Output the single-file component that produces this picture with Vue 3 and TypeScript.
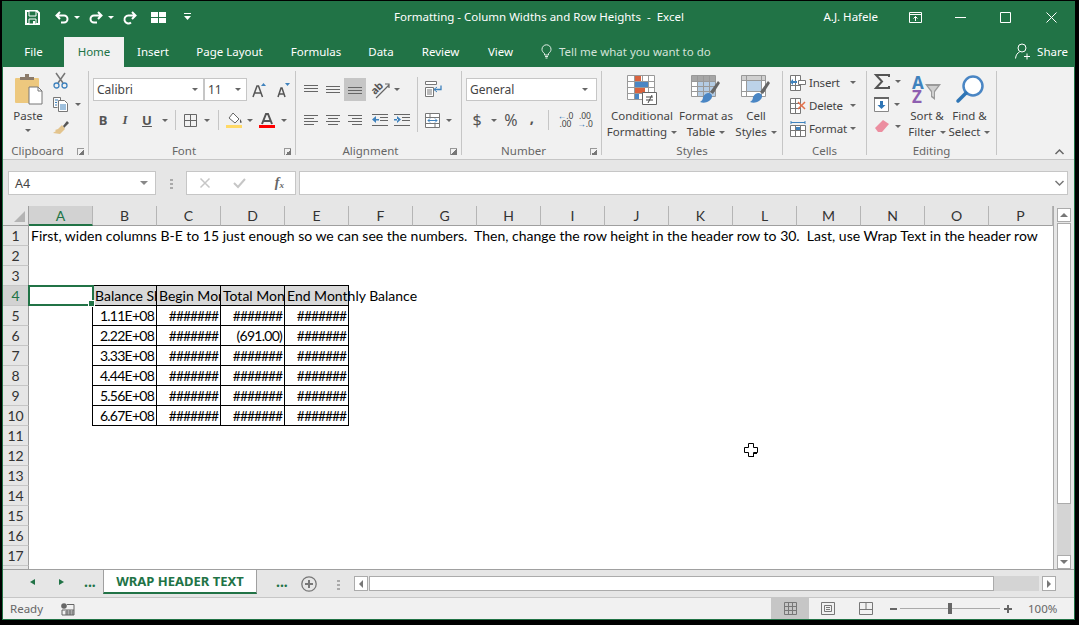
<script setup lang="ts">
import { computed } from 'vue'

interface SheetCell {
  key: string
  text: string
  classes: Record<string, boolean>
}

const columns = 'ABCDEFGHIJKLMNOP'.split('')
const tabs = ['File', 'Home', 'Insert', 'Page Layout', 'Formulas', 'Data', 'Review', 'View']
const docTitle = 'Formatting - Column Widths and Row Heights  -  Excel'

const values: Record<string, string> = {
  A1: 'First, widen columns B-E to 15 just enough so we can see the numbers.  Then, change the row height in the header row to 30.  Last, use Wrap Text in the header row',
  B4: 'Balance Sheet',
  C4: 'Begin Monthly',
  D4: 'Total Monthly',
  E4: 'End Monthly Balance',
  B5: '1.11E+08',
  B6: '2.22E+08',
  B7: '3.33E+08',
  B8: '4.44E+08',
  B9: '5.56E+08',
  B10: '6.67E+08',
  D6: '(691.00)'
}

const hashes = '#######'

const rows = computed(() => {
  const list: { num: number; cells: SheetCell[] }[] = []
  for (let r = 1; r <= 18; r++) {
    const cells = columns.map((col) => {
      const inTable = r >= 4 && r <= 10 && 'BCDE'.includes(col)
      let text = values[col + r] || ''
      if (inTable && r > 4 && !text) text = hashes
      return {
        key: col + r,
        text,
        classes: {
          boxed: inTable,
          head: inTable && r === 4,
          num: inTable && r > 4,
          hash: text === hashes,
          above: r === 3 && 'BCDE'.includes(col),
          before: col === 'A' && r >= 4 && r <= 10,
          spill: col + r === 'A1' || col + r === 'E4'
        }
      }
    })
    list.push({ num: r, cells })
  }
  return list
})
</script>

<template>
  <div class="window">
    <div class="titlebar">
      <svg class="qa-save" width="15" height="15" viewBox="0 0 15 15"><path d="M1 1h11l2 2v11H1z" fill="none" stroke="#fff" stroke-width="2" /><path d="M4 1h7v5H4zM4 9h7v5H4z" fill="#217346" stroke="#fff" /><rect x="8" y="11" width="2" height="3" fill="#fff" /></svg>
      <svg class="qa-undo" width="14" height="13" viewBox="0 0 14 13"><path d="M5 1 1.5 4.5 5 8M2 4.5h7a3.5 3.5 0 0 1 0 7H6" fill="none" stroke="#fff" stroke-width="2" /></svg>
      <i class="qa-caret caret white"></i>
      <svg class="qa-redo" width="14" height="13" viewBox="0 0 14 13"><path d="M9 1l3.500 3.500L9 8M12 4.500H5a3.500 3.500 0 0 0 0 7h3" fill="none" stroke="#fff" stroke-width="2" /></svg>
      <i class="qa-caret caret white"></i>
      <svg class="qa-redo" width="14" height="13" viewBox="0 0 14 13"><path d="M9 1l3.500 3.500L9 8M12 4.500H6a4 4 0 1 0 2 7" fill="none" stroke="#fff" stroke-width="2" /></svg>
      <svg class="qa-grid" width="15" height="11" viewBox="0 0 15 11"><path d="M0 0h7v5H0zM8 0h7v5H8zM0 6h7v5H0zM8 6h7v5H8z" fill="#fff" /></svg>
      <svg class="qa-more" width="7" height="8" viewBox="0 0 7 8"><path d="M0 0h7v1H0zM0 3h7L3.500 7z" fill="#fff" /></svg>
      <span class="doc-title">{{ docTitle }}</span>
      <span class="user">A.J. Hafele</span>
      <span class="win-btn first">
        <svg width="13" height="11" viewBox="0 0 13 11"><path d="M.5.500h12v10H.500zM0 2.500h13M6.500 9V4.500M4.500 6.500l2-2 2 2" fill="none" stroke="#fff" /></svg>
      </span>
      <span class="win-btn"><svg width="11" height="11" viewBox="0 0 11 11"><path d="M0 5.500h11" stroke="#fff" /></svg></span>
      <span class="win-btn"><svg width="11" height="11" viewBox="0 0 11 11"><path d="M.5.500h10v10H.500z" fill="none" stroke="#fff" /></svg></span>
      <span class="win-btn"><svg width="11" height="11" viewBox="0 0 11 11"><path d="M.5.500l10 10M10.500.500l-10 10" stroke="#fff" /></svg></span>
    </div>

    <div class="tabbar">
      <span v-for="tab in tabs" :key="tab" class="tab" :class="{ active: tab === 'Home' }">{{ tab }}</span>
      <span class="tell">
        <svg width="11" height="15" viewBox="0 0 11 15"><path d="M3.500 11V9.500C2 8.500 1 7 1 5.300a4.500 4.500 0 0 1 9 0c0 1.700-1 3.200-2.500 4.200V11zM4 12.500h3M4.500 14h2" fill="none" stroke="#e4efe8" /></svg>
        Tell me what you want to do
      </span>
      <span class="share">
        <svg width="15" height="16" viewBox="0 0 15 16"><circle cx="7" cy="5" r="4" fill="none" stroke="#fff" /><path d="M.5 15.500c.5-4 2-5.500 4-6.500M9 13.500h6M12 10.500v6" fill="none" stroke="#fff" /></svg>
        Share
      </span>
    </div>

    <div class="ribbon">
      <section class="group g-clipboard">
        <div class="body clip-body">
          <div class="paste">
            <svg width="29" height="31" viewBox="0 0 29 31">
              <rect x="1" y="4" width="24" height="25" rx="1" fill="#edc87e" />
              <path d="M6 6V3h5V0h4v3h5v3z" fill="#8b7b6b" />
              <path d="M15 13h9l4 4v13H15z" fill="#fff" stroke="#777" />
              <path d="M24 13v4h4" fill="none" stroke="#777" />
            </svg>
            <span class="big-text">Paste</span>
            <i class="caret paste-caret"></i>
          </div>
          <div class="clip-tools">
            <svg width="15" height="16" viewBox="0 0 15 16"><path d="M3 0l7 10M12 0 5 10" stroke="#777" stroke-width="1.500" /><circle cx="3.500" cy="12.500" r="2.500" fill="none" stroke="#3f82bd" stroke-width="1.300" /><circle cx="11.500" cy="12.500" r="2.500" fill="none" stroke="#3f82bd" stroke-width="1.300" /></svg>
            <div class="copy-row">
              <svg width="16" height="15" viewBox="0 0 16 15"><path d="M.5.500h7v3M.5.500v10h4" fill="#fff" stroke="#777" /><path d="M5.500 3.500h6l3 3v8h-9z" fill="#fff" stroke="#777" /><path d="M2 3h3M2 5.500h2M2 8h2M7 8h6M7 10h6M7 12h6" stroke="#3f82bd" /></svg>
              <i class="caret"></i>
            </div>
            <svg width="16" height="15" viewBox="0 0 16 15"><path d="M10 6l4-5 2 2-5 5z" fill="#555" /><path d="M9 5l3 4-5 5-7-1 3-2-1-1 3-1z" fill="#e3c48d" /></svg>
          </div>
        </div>
        <div class="label"><span>Clipboard</span><i class="launch"></i></div>
      </section>

      <section class="group g-font">
        <div class="body pad-top">
          <div class="font-row">
            <span class="combo">Calibri<i class="caret"></i></span>
            <span class="combo size">11<i class="caret"></i></span>
            <svg width="13" height="14" viewBox="0 0 13 14"><path d="M0 14 4 3h1.500l4 11M1.800 10h6" fill="none" stroke="#555" stroke-width="1.500" /><path d="M8 3l2.500-3L13 3z" fill="#3f82bd" /></svg>
            <svg width="13" height="14" viewBox="0 0 13 14"><path d="M1 14 4 5h1l3 9M2 11h5" fill="none" stroke="#555" stroke-width="1.500" /><path d="M8 0h5l-2.500 3z" fill="#3f82bd" /></svg>
          </div>
          <div class="font-tools">
            <b class="glyph">B</b>
            <em class="glyph serif">I</em>
            <u class="glyph strong">U</u>
            <i class="caret"></i>
            <span class="sep"></span>
            <svg width="13" height="13" viewBox="0 0 13 13"><path d="M.5.500h12v12H.500zM6.500 0v13M0 6.500h13" fill="none" stroke="#666" /></svg>
            <i class="caret"></i>
            <span class="sep"></span>
            <svg width="17" height="15" viewBox="0 0 17 15"><path d="M7 0l6 6-4 4-6-5z" fill="#fff" stroke="#666" /><path d="M14 6c1 1.500 2 2.500 1.500 3.500S14 10 14 8.500z" fill="#555" /><rect y="12" width="16" height="3" fill="#ffd966" /></svg>
            <i class="caret"></i>
            <svg width="16" height="15" viewBox="0 0 16 15"><path d="M3 11 7 1h2l4 10M4.500 8h7" fill="none" stroke="#555" stroke-width="2" /><rect y="12" width="16" height="3" fill="#f00" /></svg>
            <i class="caret"></i>
          </div>
        </div>
        <div class="label"><span>Font</span><i class="launch"></i></div>
      </section>

      <section class="group g-align">
        <div class="body align-body">
          <div class="align-grid">
            <svg width="15" height="9" viewBox="0 0 15 9"><path d="M0 .5h14M0 3.500h14M0 6.500h14" stroke="#666" /></svg>
            <svg width="15" height="9" viewBox="0 0 15 9"><path d="M0 1.500h14M0 4.500h14M0 7.500h14" stroke="#666" /></svg>
            <span class="pressed"><svg width="15" height="9" viewBox="0 0 15 9"><path d="M0 2.500h14M0 5.500h14M0 8.500h14" stroke="#666" /></svg></span>
            <svg class="orient" width="20" height="18" viewBox="0 0 20 18"><path d="M5 17 18 4M14 3h4v4" fill="none" stroke="#666" stroke-width="1.200" /><text x="0" y="11" class="mini" transform="rotate(-45 6 8)">ab</text></svg>
            <i class="caret left"></i>
            <svg width="15" height="10" viewBox="0 0 15 10"><path d="M0 .5h14M0 3.500h10M0 6.500h14M0 9.500h10" stroke="#666" /></svg>
            <svg width="15" height="10" viewBox="0 0 15 10"><path d="M0 .5h14M2 3.500h10M0 6.500h14M2 9.500h10" stroke="#666" /></svg>
            <svg width="15" height="10" viewBox="0 0 15 10"><path d="M0 .5h14M4 3.500h10M0 6.500h14M4 9.500h10" stroke="#666" /></svg>
            <svg width="16" height="12" viewBox="0 0 16 12"><path d="M0 .5h16M8 3.500h8M8 6.500h8M0 11.500h16" stroke="#666" /><path d="M0 5.500 4 2v7zM3 5h4v1.500H3z" fill="#3f82bd" /></svg>
            <svg width="16" height="12" viewBox="0 0 16 12"><path d="M0 .5h16M8 3.500h8M8 6.500h8M0 11.500h16" stroke="#666" /><path d="M7 5.500 3 2v7zM0 5h4v1.500H0z" fill="#3f82bd" /></svg>
          </div>
          <span class="sep tall"></span>
          <div class="wrap-tools">
            <svg width="18" height="16" viewBox="0 0 18 16"><path d="M.5.500h11v3H.500zM.5 6.500h8v9h-8zM2 9h5M2 11h5M2 13h5" fill="#fff" stroke="#777" /><path d="M9 8.500h7v-4" fill="none" stroke="#3f82bd" stroke-width="1.300" /><path d="M12 6 9 8.500l3 2.500" fill="none" stroke="#3f82bd" /></svg>
            <div class="copy-row">
              <svg width="15" height="15" viewBox="0 0 15 15"><path d="M.5.500h14v14H.500zM0 4.500h15M0 10.500h15M5 0v4M10 11v4" fill="#fff" stroke="#777" /><path d="M3 7.500h9M3 7.500l2-2M3 7.500l2 2M12 7.500l-2-2M12 7.500l-2 2" fill="none" stroke="#3f82bd" /></svg>
              <i class="caret"></i>
            </div>
          </div>
        </div>
        <div class="label"><span>Alignment</span><i class="launch"></i></div>
      </section>

      <section class="group g-number">
        <div class="body pad-top">
          <span class="combo general">General<i class="caret"></i></span>
          <div class="num-tools">
            <span class="glyph dollar">$</span>
            <i class="caret"></i>
            <span class="glyph percent">%</span>
            <b class="glyph comma">,</b>
            <span class="sep"></span>
            <span class="dec"><i><em>←</em>.0</i><i>.00</i></span>
            <span class="dec"><i>.00</i><i><em>→</em>.0</i></span>
          </div>
        </div>
        <div class="label"><span>Number</span><i class="launch"></i></div>
      </section>

      <section class="group g-styles">
        <div class="body styles-body">
          <div class="style-col c1">
            <svg width="30" height="30" viewBox="0 0 30 30">
              <path d="M.5.500h27v24H.500zM7.500 0v25M0 6.500h28M0 12.500h28M0 18.500h28M15.500 0v25M21.500 0v25" fill="#fff" stroke="#999" />
              <path d="M8 1h6v5H8z" fill="#d9633f" /><path d="M8 7h13v5H8z" fill="#4a86c4" /><path d="M8 13h10v5H8z" fill="#d9633f" /><path d="M8 19h4v5H8z" fill="#4a86c4" />
              <path d="M15.500 17.500h14v12h-14z" fill="#fff" stroke="#666" /><path d="M19 22h7M19 25h7M25 20l-4 8" stroke="#444" />
            </svg>
            <span class="big-text">Conditional</span>
            <span class="big-text">Formatting<i class="caret inline"></i></span>
          </div>
          <div class="style-col c2">
            <svg width="30" height="30" viewBox="0 0 30 30">
              <path d="M.5.500h24v21H.500z" fill="#fff" stroke="#999" />
              <path d="M1 1h23v5H1z" fill="#a6a6a6" /><path d="M7 7h17v14H7z" fill="#b4cce4" />
              <path d="M0 6.500h25M0 11.500h25M0 16.500h25M6.500 0v22M12.500 0v22M18.500 0v22" stroke="#999" />
              <path d="M19 17l8-11 2 2-7 11z" fill="#666" /><path d="M12 22c2-4 6-5 8-3s1 5-2 7-6 2-9 1c2-1 3-3 3-5z" fill="#4a86c4" />
            </svg>
            <span class="big-text">Format as</span>
            <span class="big-text">Table<i class="caret inline"></i></span>
          </div>
          <div class="style-col c3">
            <svg width="30" height="30" viewBox="0 0 30 30">
              <path d="M.5.500h24v21H.500z" fill="#fff" stroke="#999" /><path d="M1 1h23v4H1z" fill="#d0d0d0" /><path d="M6 5h14v12H6z" fill="#bcd2e8" />
              <path d="M0 5.500h25M0 16.500h25M5.500 0v22M20.500 0v22" stroke="#999" />
              <path d="M19 17l8-11 2 2-7 11z" fill="#666" /><path d="M12 22c2-4 6-5 8-3s1 5-2 7-6 2-9 1c2-1 3-3 3-5z" fill="#4a86c4" />
            </svg>
            <span class="big-text">Cell</span>
            <span class="big-text">Styles<i class="caret inline"></i></span>
          </div>
        </div>
        <div class="label center"><span>Styles</span></div>
      </section>

      <section class="group g-cells">
        <div class="body">
          <div class="cell-row">
            <svg width="16" height="16" viewBox="0 0 16 16"><path d="M.5.500h10v15H.500zM5.500 0v16M0 10.500h10" fill="#fff" stroke="#777" /><path d="M8.500 5.500h7v4h-7z" fill="#fff" stroke="#777" /><path d="M0 7 3 4v2h4v2H3v2z" fill="#3f82bd" /></svg>
            <span>Insert</span><i class="caret"></i>
          </div>
          <div class="cell-row">
            <svg width="16" height="16" viewBox="0 0 16 16"><path d="M.5.500h10v15H.500zM5.500 0v16M0 5.500h10M0 10.500h10" fill="#fff" stroke="#777" /><path d="M8 4l7 7M15 4l-7 7" stroke="#e2704a" stroke-width="1.500" /></svg>
            <span>Delete</span><i class="caret"></i>
          </div>
          <div class="cell-row">
            <svg width="16" height="16" viewBox="0 0 16 16"><path d="M.5 4.500h15v11H.500zM5.500 4v12M10.500 4v12M0 9.500h16" fill="#fff" stroke="#777" /><path d="M6 6h4v3H6z" fill="#3f82bd" /><path d="M1 1.500h14M1 0v3M15 0v3" stroke="#3f82bd" /></svg>
            <span>Format</span><i class="caret"></i>
          </div>
        </div>
        <div class="label center"><span>Cells</span></div>
      </section>

      <section class="group g-editing">
        <div class="body edit-body">
          <div class="edit-tools">
            <div class="edit-row">
              <svg width="16" height="15" viewBox="0 0 16 15"><path d="M15 3V1H2l6 6.500L2 14h13v-2" fill="none" stroke="#555" stroke-width="2" /></svg>
              <i class="caret"></i>
            </div>
            <div class="edit-row">
              <svg width="15" height="15" viewBox="0 0 15 15"><path d="M.5.500h14v14H.500z" fill="#fff" stroke="#888" /><path d="M0 0h15v2H0z" fill="#666" /><path d="M6 4h3v4h2.500l-4 4-4-4H6z" fill="#2f75b5" /></svg>
              <i class="caret"></i>
            </div>
            <div class="edit-row">
              <svg width="16" height="13" viewBox="0 0 16 13"><path d="M1 8l8-8 6 4-7 8H4z" fill="#ec8ea0" /></svg>
              <i class="caret"></i>
            </div>
          </div>
          <div class="style-col c-sort">
            <svg width="30" height="28" viewBox="0 0 30 28">
              <text x="0" y="13" class="sort-a">A</text>
              <text x="0" y="27" class="sort-z">Z</text>
              <path d="M13 8h16l-6 8v8l-4-3v-5z" fill="#9a9a9a" /><path d="M16 10h10l-4 5v6l-2-1v-5z" fill="#cfcfcf" />
            </svg>
            <span class="big-text">Sort &amp;</span>
            <span class="big-text">Filter<i class="caret inline"></i></span>
          </div>
          <div class="style-col c-find">
            <svg width="28" height="28" viewBox="0 0 28 28"><circle cx="17" cy="11" r="9.500" fill="#fff" stroke="#4a86c4" stroke-width="2.500" /><path d="M10 18 2 26" stroke="#2f75b5" stroke-width="3.500" stroke-linecap="round" /></svg>
            <span class="big-text">Find &amp;</span>
            <span class="big-text">Select<i class="caret inline"></i></span>
          </div>
        </div>
        <div class="label center"><span>Editing</span></div>
      </section>

      <div class="collapse">
        <svg width="9" height="6" viewBox="0 0 9 6"><path d="M.5 5 4.500 1l4 4" fill="none" stroke="#666" stroke-width="1.500" /></svg>
      </div>
    </div>

    <div class="formula-row">
      <div class="namebox">A4<i class="caret big"></i></div>
      <span class="grip"></span>
      <div class="fx-box">
        <svg width="10" height="10" viewBox="0 0 10 10"><path d="M.5.500l9 9M9.500.500l-9 9" stroke="#c6c6c6" stroke-width="1.500" /></svg>
        <svg class="check" width="13" height="10" viewBox="0 0 13 10"><path d="M1 5l4 4 7-8" fill="none" stroke="#c6c6c6" stroke-width="2" /></svg>
        <span class="fx">f<sub>x</sub></span>
      </div>
      <div class="formula-input">
        <svg width="9" height="6" viewBox="0 0 9 6"><path d="M.5 1l4 4 4-4" fill="none" stroke="#777" stroke-width="1.500" /></svg>
      </div>
    </div>

    <div class="workarea">
      <div class="sheet">
        <div class="corner"><svg width="11" height="11" viewBox="0 0 11 11"><path d="M11 0v11H0z" fill="#b4b4b4" /></svg></div>
        <div v-for="col in columns" :key="col" class="col-head" :class="{ current: col === 'A' }">{{ col }}</div>
        <template v-for="row in rows" :key="row.num">
          <div class="row-head" :class="{ current: row.num === 4 }">{{ row.num }}</div>
          <div v-for="cell in row.cells" :key="cell.key" class="cell" :class="cell.classes"><span>{{ cell.text }}</span><div v-if="cell.key === 'A4'" class="selection"><i class="handle"></i></div></div>
        </template>
        <svg class="pointer" width="14" height="14" viewBox="0 0 14 14"><path d="M4.500.500h5v4h4v5h-4v4h-5v-4h-4v-5h4z" fill="#fff" stroke="#000" /><path d="M10 14h-5v-1h4V10h4v1h-3z" fill="#000" /></svg>
      </div>
      <div class="vscroll">
        <span class="sb-btn"><i class="tri up"></i></span>
        <span class="vthumb"></span>
        <span class="vtrack"></span>
        <span class="sb-btn"><i class="tri down"></i></span>
      </div>
    </div>

    <div class="sheetbar">
      <i class="nav-tri prev"></i>
      <i class="nav-tri next"></i>
      <b class="more m1">...</b>
      <div class="sheet-tab">WRAP HEADER TEXT</div>
      <b class="more m2">...</b>
      <svg class="add" width="16" height="16" viewBox="0 0 16 16"><circle cx="8" cy="8" r="7.200" fill="none" stroke="#777" stroke-width="1.300" /><path d="M8 4v8M4 8h8" stroke="#777" stroke-width="2" /></svg>
      <span class="grip g2"></span>
      <div class="hscroll">
        <span class="sb-btn"><i class="tri lf"></i></span>
        <span class="hthumb"></span>
        <span class="htrack"></span>
        <span class="sb-btn"><i class="tri rt"></i></span>
      </div>
    </div>

    <div class="statusbar">
      <span class="ready">Ready</span>
      <svg class="macro" width="13" height="12" viewBox="0 0 13 12"><circle cx="3" cy="3" r="2.800" fill="#666" /><path d="M6 1.500h7V12H1V7h12M4 9h8M4 11h8M6 7v5M9 7v5M12 7v5" fill="none" stroke="#666" /></svg>
      <div class="views">
        <span class="view on"><svg width="13" height="13" viewBox="0 0 13 13"><path d="M.5.500h12v12H.500zM4.500 0v13M8.500 0v13M0 4.500h13M0 8.500h13" fill="none" stroke="#777" /></svg></span>
        <span class="view"><svg width="14" height="13" viewBox="0 0 14 13"><path d="M.5.500h13v12H.500z" fill="none" stroke="#777" /><path d="M3.500 3.500h7v6h-7zM5 5.500h4M5 7.500h4" fill="none" stroke="#777" /></svg></span>
        <span class="view"><svg width="14" height="13" viewBox="0 0 14 13"><path d="M.5.500h13v12H.500zM.5 7.500h6.500v-7M7 7.500h6.500" fill="none" stroke="#777" /></svg></span>
      </div>
      <span class="zoom-sign minus"></span>
      <div class="slider"><i class="knob"></i></div>
      <span class="zoom-sign plus"></span>
      <span class="percent-text">100%</span>
    </div>
  </div>
</template>

<style>
html,
body {
  margin: 0;
  background: #000;
  overflow: hidden;
}
</style>

<style scoped>
.window {
  box-sizing: border-box;
  width: 1073px;
  height: 619px;
  margin: 1px 0 0 2px;
  display: flex;
  flex-direction: column;
  border: 1px solid #217346;
  border-top: 0;
  background: #f1f1f1;
  font-family: "Noto Sans", sans-serif;
  font-size: 11.5px;
  color: #444;
  overflow: hidden;
}

i {
  font-style: normal;
}

svg {
  overflow: visible;
}

.caret {
  display: inline-block;
  width: 0;
  height: 0;
  border-left: 3.5px solid transparent;
  border-right: 3.5px solid transparent;
  border-top: 3.5px solid #666;
}

.caret.white {
  border-top-color: #fff;
}

.caret.inline {
  margin-left: 4px;
  vertical-align: middle;
  border-left-width: 3px;
  border-right-width: 3px;
  border-top-width: 3px;
}

/* title bar */
.titlebar {
  height: 36px;
  flex: none;
  display: flex;
  align-items: center;
  padding-bottom: 4px;
  box-sizing: border-box;
  background: #217346;
  color: #fff;
}

.qa-save {
  margin-left: 22px;
}

.qa-undo {
  margin-left: 15px;
}

.qa-caret {
  margin-left: 5px;
}

.qa-redo {
  margin-left: 9px;
}

.qa-grid {
  margin-left: 14px;
}

.qa-more {
  margin-left: 18px;
}

.doc-title {
  margin: -2px 0 0 203px;
  width: 332px;
  white-space: pre;
}

.user {
  margin: -2px 0 0 102px;
  width: 70px;
}

.win-btn {
  width: 46px;
  display: flex;
  justify-content: center;
}

/* ribbon tabs */
.tabbar {
  height: 30px;
  flex: none;
  display: grid;
  grid-template-columns: 61px 60px 58px 95px 78px 52px 67px 53px 1fr auto;
  align-items: stretch;
  background: #217346;
  color: #fff;
}

.tab {
  display: flex;
  align-items: center;
  justify-content: center;
  padding-bottom: 2px;
}

.tab.active {
  background: #f1f1f1;
  color: #217346;
}

.tell {
  display: flex;
  align-items: center;
  gap: 7px;
  margin-left: 14px;
  padding-bottom: 2px;
  color: #d3e3d9;
}

.share {
  display: flex;
  align-items: center;
  gap: 7px;
  padding: 0 6px 2px 0;
}

/* ribbon */
.ribbon {
  height: 93px;
  flex: none;
  box-sizing: border-box;
  display: flex;
  padding-top: 4px;
  border-bottom: 1px solid #c6c6c6;
}

.group {
  flex: none;
  height: 84px;
  box-sizing: border-box;
  display: flex;
  flex-direction: column;
  border-right: 1px solid #c6c6c6;
}

.g-clipboard { width: 86px; }
.g-font { width: 207px; }
.g-align { width: 166px; }
.g-number { width: 140px; }
.g-styles { width: 181px; }
.g-cells { width: 84px; }
.g-editing { width: 130px; }

.body {
  flex: 1;
  min-height: 0;
}

.pad-top {
  padding: 7px 0 0 4px;
}

.label {
  height: 14px;
  margin-bottom: -3px;
  display: flex;
  line-height: 14px;
  color: #666;
  flex: none;
}

.label span {
  flex: 1;
  text-align: center;
}

.launch {
  flex: none;
  width: 7px;
  height: 7px;
  margin: 4px 4px 0 5px;
  box-sizing: border-box;
  border-left: 1px solid #999;
  border-top: 1px solid #999;
  background: linear-gradient(135deg, transparent 50%, #777 50%);
}

.big-text {
  line-height: 16px;
  white-space: nowrap;
}

.clip-body {
  display: flex;
}

.paste {
  width: 50px;
  padding-top: 3px;
  display: flex;
  flex-direction: column;
  align-items: center;
}

.paste svg {
  height: 31px;
  margin-bottom: 3px;
  margin-left: 1px;
}

.paste-caret {
  margin-top: 5px;
}

.clip-tools {
  padding: 2px 0 0;
  display: flex;
  flex-direction: column;
  gap: 8px;
  align-items: flex-start;
}

.copy-row {
  display: flex;
  align-items: center;
  gap: 6px;
}

.combo {
  box-sizing: border-box;
  height: 23px;
  display: flex;
  align-items: center;
  justify-content: space-between;
  padding: 0 5px 0 3px;
  border: 1px solid #c6c6c6;
  background: #fff;
  font-size: 12px;
}

.font-row {
  display: grid;
  grid-template-columns: 111px 43px 12px 11px 12px;
  align-items: center;
}

.font-row svg:nth-of-type(1) {
  margin-left: 6px;
}

.font-row svg:nth-of-type(2) {
  margin-left: 18px;
}

.font-tools {
  height: 22px;
  margin-top: 8px;
  margin-left: -1px;
  display: grid;
  grid-template-columns: 22px 22px 22px 13px 8px 23px 10px 12px 20px 11px 24px 10px;
  place-items: center;
}

.glyph {
  font-size: 13px;
  color: #555;
}

.serif {
  font-family: "Liberation Serif", serif;
  font-style: italic;
  font-weight: 700;
}

.strong {
  font-weight: 700;
}

.sep {
  display: block;
  width: 1px;
  height: 20px;
  background: #c6c6c6;
}

.sep.tall {
  height: 55px;
  margin: 6px 0 0 7px;
}

.align-body {
  display: flex;
  padding-left: 4px;
}

.align-grid {
  width: 110px;
  padding-top: 7px;
  display: grid;
  grid-template-columns: 22px 22px 22px 28px 16px;
  grid-template-rows: 23px 22px;
  row-gap: 8px;
  place-items: center;
}

.pressed {
  width: 22px;
  height: 23px;
  display: flex;
  align-items: center;
  justify-content: center;
  background: #c6c6c6;
}

.orient {
  margin-left: 2px;
}

.left {
  justify-self: start;
  margin-left: 0;
}

.mini {
  font-size: 10.5px;
  font-weight: 700;
  fill: #555;
  font-family: "Noto Sans", sans-serif;
}

.wrap-tools {
  margin-left: 7px;
  padding-top: 10px;
  display: flex;
  flex-direction: column;
  gap: 16px;
}

.general {
  width: 131px;
  padding-right: 8px;
}

.num-tools {
  height: 22px;
  margin-top: 8px;
  display: grid;
  grid-template-columns: 22px 11px 24px 18px 14px 21px 18px;
  place-items: center;
}

.dollar,
.percent {
  font-size: 16px;
}

.comma {
  font-size: 15px;
  line-height: 10px;
  margin-top: -7px;
}

.dec {
  display: flex;
  flex-direction: column;
  font-size: 8.5px;
  line-height: 8px;
  text-align: center;
}

.dec em {
  font-style: normal;
  color: #2f75b5;
}

.styles-body {
  display: flex;
  padding-left: 2px;
}

.style-col {
  padding-top: 4px;
  display: flex;
  flex-direction: column;
  align-items: center;
}

.style-col svg {
  height: 30px;
  margin-bottom: 3px;
}

.c1 { width: 76px; }
.c2 { width: 52px; }
.c3 { width: 48px; }
.c-sort { width: 48px; padding-top: 5px; }
.c-find { width: 37px; padding-top: 4px; }
.c-sort svg { margin-bottom: 4px; height: 28px; }
.c-find svg { margin-bottom: 5px; height: 28px; }

.cell-row {
  height: 23px;
  padding-left: 7px;
  display: grid;
  grid-template-columns: 16px 38px 6px;
  column-gap: 3px;
  align-items: center;
  letter-spacing: -0.2px;
}

.edit-body {
  display: flex;
}

.edit-tools {
  width: 36px;
  padding: 3px 0 0 7px;
  box-sizing: border-box;
  display: flex;
  flex-direction: column;
  gap: 8px;
}

.edit-row {
  display: flex;
  align-items: center;
  gap: 5px;
}

.sort-a {
  font-size: 17px;
  font-weight: 700;
  fill: #3f82bd;
  font-family: "Noto Sans", sans-serif;
}

.sort-z {
  font-size: 17px;
  font-weight: 700;
  fill: #8e5fb0;
  font-family: "Noto Sans", sans-serif;
}

.collapse {
  flex: 1;
  display: flex;
  justify-content: flex-end;
  align-items: flex-end;
  padding: 0 10px 4px 0;
}

/* formula bar */
.formula-row {
  height: 46px;
  flex: none;
  box-sizing: border-box;
  display: flex;
  padding: 11px 6px 11px 5px;
  background: #e6e6e6;
}

.namebox,
.fx-box,
.formula-input {
  box-sizing: border-box;
  height: 24px;
  border: 1px solid #c6c6c6;
  background: #fff;
  display: flex;
  align-items: center;
}

.namebox {
  width: 148px;
  padding: 0 7px 0 6px;
  justify-content: space-between;
  font-size: 12.5px;
}

.caret.big {
  border-left-width: 4px;
  border-right-width: 4px;
  border-top-width: 4px;
  border-top-color: #888;
}

.grip {
  width: 3px;
  height: 11px;
  margin: 7px 13px 0 14px;
  background: radial-gradient(circle, #aaa 1.3px, transparent 1.4px) 0 0 / 3px 4px repeat-y;
}

.fx-box {
  width: 110px;
  padding: 0 11px 0 13px;
  justify-content: space-between;
}

.check {
  margin-right: 5px;
}

.fx {
  font-family: "Liberation Serif", serif;
  font-style: italic;
  font-size: 14px;
  font-weight: 700;
  color: #666;
}

.fx sub {
  font-size: 9px;
  vertical-align: -1px;
  line-height: 0;
}

.formula-input {
  flex: 1;
  margin-left: 3px;
  justify-content: flex-end;
  padding-right: 3px;
}

/* sheet */
.workarea {
  height: 363px;
  flex: none;
  display: flex;
  background: #e6e6e6;
}

.sheet {
  position: relative;
  width: 1051px;
  height: 363px;
  box-sizing: border-box;
  flex: none;
  display: grid;
  grid-template-columns: 26px repeat(16, 64px);
  grid-auto-rows: 20px;
  overflow: hidden;
  border-right: 1px solid #aaa;
  background: #fff;
  font-family: Lato, sans-serif;
  font-size: 14px;
  color: #000;
}

.corner,
.col-head,
.row-head {
  box-sizing: border-box;
  background: #e6e6e6;
  display: flex;
  align-items: center;
  justify-content: center;
  color: #333;
}

.corner {
  justify-content: flex-end;
  align-items: flex-start;
  padding: 5px 3px 0 0;
  border-bottom: 1px solid #9f9f9f;
  border-right: 1px solid #9f9f9f;
}

.col-head {
  border-right: 1px solid #b5b5b5;
  border-bottom: 1px solid #9f9f9f;
}

.col-head.current {
  background: #d2d2d2;
  color: #217346;
  border-bottom: 2px solid #217346;
}

.row-head {
  border-right: 1px solid #9f9f9f;
  border-bottom: 1px solid #c6c6c6;
}

.row-head.current {
  background: #d2d2d2;
  color: #217346;
}

.cell {
  position: relative;
  box-sizing: border-box;
  min-width: 0;
  padding: 0 2px;
  line-height: 20px;
  white-space: pre;
  overflow: hidden;
}

.cell.spill {
  overflow: visible;
  z-index: 1;
}

.cell.boxed {
  border-right: 1px solid #000;
  border-bottom: 1px solid #000;
}

.cell.head {
  background: #d9d9d9;
}

.cell.num {
  text-align: right;
  padding-right: 2px;
  letter-spacing: -0.75px;
}

.cell.hash {
  letter-spacing: -1.1px;
}

.cell.above {
  border-bottom: 1px solid #000;
}

.cell.before {
  border-right: 1px solid #000;
  overflow: visible;
}

.selection {
  position: absolute;
  z-index: 3;
  left: -1px;
  top: -1px;
  width: 66px;
  height: 21px;
  box-sizing: border-box;
  border: 2px solid #217346;
}

.handle {
  position: absolute;
  right: -3px;
  bottom: -3px;
  width: 5px;
  height: 5px;
  background: #217346;
  border: 1px solid #fff;
  box-sizing: content-box;
}

.pointer {
  position: absolute;
  left: 741px;
  top: 237px;
  z-index: 4;
}

.vscroll {
  width: 14px;
  margin: 2px 0 0 3px;
  display: flex;
  flex-direction: column;
}

.sb-btn {
  flex: none;
  box-sizing: border-box;
  width: 14px;
  height: 14px;
  display: flex;
  align-items: center;
  justify-content: center;
  background: #fff;
  border: 1px solid #ababab;
}

.vthumb {
  height: 281px;
  margin-top: 1px;
  box-sizing: border-box;
  background: #fff;
  border: 1px solid #ababab;
}

.vtrack {
  flex: 1;
  background: #d4d4d4;
}

.tri {
  display: block;
  width: 0;
  height: 0;
}

.tri.up {
  border-left: 4px solid transparent;
  border-right: 4px solid transparent;
  border-bottom: 4px solid #777;
}

.tri.down {
  border-left: 4px solid transparent;
  border-right: 4px solid transparent;
  border-top: 4px solid #777;
}

.tri.lf {
  border-top: 4px solid transparent;
  border-bottom: 4px solid transparent;
  border-right: 4px solid #777;
}

.tri.rt {
  border-top: 4px solid transparent;
  border-bottom: 4px solid transparent;
  border-left: 4px solid #777;
}

/* sheet tabs */
.sheetbar {
  height: 28px;
  flex: none;
  box-sizing: border-box;
  display: flex;
  align-items: flex-start;
  border-top: 1px solid #a0a0a0;
  background: #e6e6e6;
}

.nav-tri {
  margin-top: 9px;
  width: 0;
  height: 0;
  border-top: 3.5px solid transparent;
  border-bottom: 3.5px solid transparent;
}

.nav-tri.prev {
  margin-left: 27px;
  border-right: 5px solid #217346;
}

.nav-tri.next {
  margin-left: 24px;
  border-left: 5px solid #217346;
}

.more {
  flex: none;
  color: #217346;
  font-size: 14px;
  font-weight: 700;
  line-height: 24px;
}

.more.m1 {
  margin-left: 20px;
  width: 19px;
}

.more.m2 {
  margin-left: 19px;
  width: 12px;
}

.sheet-tab {
  box-sizing: border-box;
  width: 154px;
  height: 24px;
  flex: none;
  display: flex;
  align-items: center;
  justify-content: center;
  background: #fff;
  border: 1px solid #a0a0a0;
  border-top: 0;
  border-bottom: 2px solid #217346;
  color: #217346;
  font-weight: 700;
  font-size: 13px;
}

.add {
  flex: none;
  margin: 6px 0 0 13px;
}

.grip.g2 {
  flex: none;
  margin: 9px 0 0 20px;
}

.hscroll {
  margin: 6px 0 0 14px;
  width: 702px;
  height: 15px;
  display: flex;
}

.hscroll .sb-btn {
  height: 15px;
}

.hthumb {
  width: 625px;
  margin-left: 1px;
  box-sizing: border-box;
  background: #fff;
  border: 1px solid #ababab;
}

.htrack {
  width: 45px;
  margin-right: 3px;
  background: #d4d4d4;
}

/* status bar */
.statusbar {
  flex: 1;
  box-sizing: border-box;
  display: flex;
  align-items: center;
  border-top: 1px solid #c6c6c6;
  color: #666;
}

.ready {
  margin-left: 7px;
  width: 51px;
}

.views {
  margin-left: 697px;
  display: flex;
  align-self: stretch;
}

.view {
  width: 38px;
  display: flex;
  align-items: center;
  justify-content: center;
}

.view.on {
  background: #c6c6c6;
}

.zoom-sign {
  position: relative;
  flex: none;
  width: 7px;
  height: 2px;
  background: #666;
}

.zoom-sign.minus {
  margin-left: 5px;
}

.zoom-sign.plus {
  width: 8px;
}

.zoom-sign.plus::after {
  content: "";
  position: absolute;
  left: 3px;
  top: -3px;
  width: 2px;
  height: 8px;
  background: #666;
}

.slider {
  position: relative;
  width: 100px;
  height: 1px;
  margin: 0 4px 0 3px;
  background: #aaa;
}

.knob {
  position: absolute;
  left: 48px;
  top: -5px;
  width: 4px;
  height: 11px;
  background: #666;
}

.percent-text {
  margin-left: 16px;
}
</style>
